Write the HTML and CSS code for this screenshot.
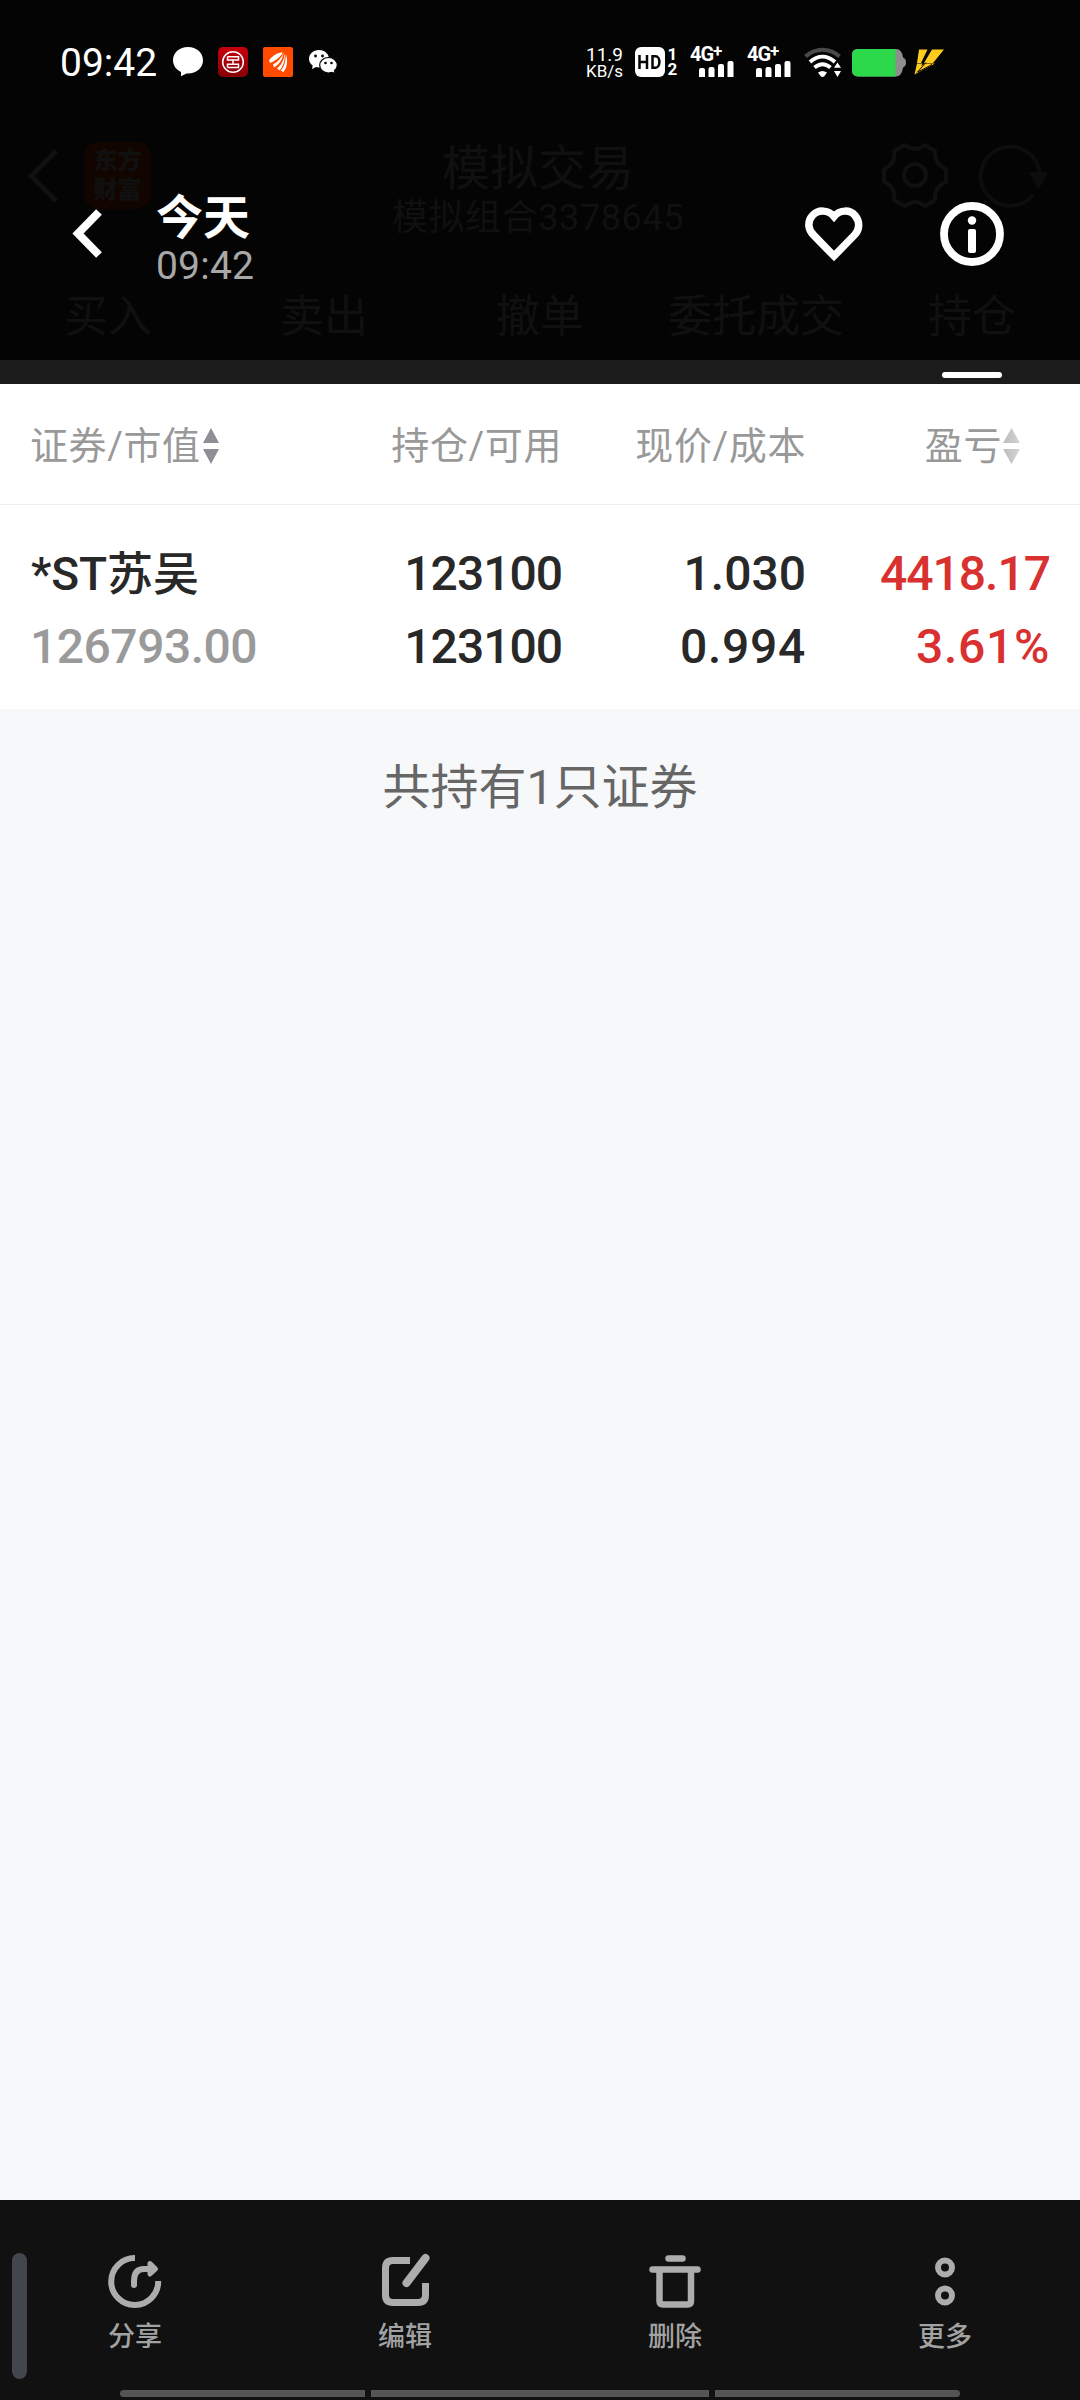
FILE: index.html
```html
<!DOCTYPE html>
<html lang="zh-CN">
<head>
<meta charset="utf-8">
<title>模拟交易</title>
<link rel="stylesheet" href="styles.css">
</head>
<body>
<div class="screen">
  <header class="top">
    <div class="status">
      <span class="clock">09:42</span>
      <div class="status-apps">
        <svg width="30" height="30" viewBox="0 0 30 30"><path d="M15 0C23.500 0 30 5.800 30 13.300S23.500 26.500 15 26.500L13.500 26.400 8 29.200V25C3.500 23 0 18.800 0 13.300 0 5.800 6.500 0 15 0Z" fill="#fff"/></svg>
        <svg width="30" height="30" viewBox="0 0 30 30"><defs><linearGradient id="bank" x1="0" y1="0" x2="0" y2="1"><stop offset="0" stop-color="#c8000c"/><stop offset="1" stop-color="#860006"/></linearGradient></defs><rect width="30" height="30" rx="5" fill="url(#bank)"/><circle cx="15" cy="15" r="10.300" fill="none" stroke="#fff" stroke-width="1.500"/><path d="M9.500 9.800H20.500V13H17.300M12.700 13H9.500V9.800M9.500 20.400H20.500V17.200H17.300M12.700 17.200H9.500V20.400M12 13H18M12 17.200H18M15 13V17.200" fill="none" stroke="#fff" stroke-width="1.500"/></svg>
        <svg width="30" height="30" viewBox="0 0 30 30"><rect width="30" height="30" rx="2" fill="#ff4b00"/><path d="M6 13.500C10 8 15 5.500 20 5.500 17.500 10 13 13.500 7 16ZM20.600 6C19.500 13 16 17.500 11 20.500L10 17.500C15 14.500 18.500 11 20.600 6ZM21.800 6C22.300 14 20 19.500 16.500 23.500L14 21.500C18.500 18 21 13 21.800 6ZM22.800 7C25 13 24.500 20 20.500 25L17.800 23.800C21.500 19 22.800 14 22.800 7Z" fill="#fff"/></svg>
        <svg class="wechat" width="30" height="26" viewBox="0 0 30 26"><path d="M11 1C17 1 21 5 21 10S17 18.500 11 18.500L8 18 4 20 4.700 16.500C2.500 15 1 12.800 1 10 1 5 5 1 11 1Z" fill="#fff"/><circle cx="7.500" cy="7" r="1.400" fill="#050505"/><circle cx="14.500" cy="7" r="1.400" fill="#050505"/><path d="M20.500 8.500C25.500 8.500 29.300 12 29.300 16.200 29.300 18.500 28.200 20.300 26.500 21.500L27.200 24.500 24 23.300 20.500 24C15.500 24 11.700 20.500 11.700 16.200S15.500 8.500 20.500 8.500Z" fill="#fff" stroke="#050505" stroke-width="1.200"/><circle cx="17.500" cy="14" r="1.300" fill="#050505"/><circle cx="23.500" cy="14" r="1.300" fill="#050505"/></svg>
      </div>
      <div class="status-system">
        <div class="speed"><span>11.9</span><span class="unit">KB/s</span></div>
        <div class="hd"><svg width="30" height="30" viewBox="0 0 30 30"><rect width="30" height="30" rx="6" fill="#fff"/><path d="M4.500 8V22M12 8V22M4.500 15H12M17.500 9.300H20.500C25.700 9.300 25.700 20.700 20.500 20.700H17.500Z" fill="none" stroke="#050505" stroke-width="2.500"/></svg><div class="sims"><span>1</span><span>2</span></div></div>
        <div class="cell"><span>4G<sup>+</sup></span><svg width="36" height="16" viewBox="0 0 36 16"><path d="M2 7H4Q6 7 6 9V16H0V9Q0 7 2 7ZM11.500 6H13.500Q15.500 6 15.500 8V16H9.500V8Q9.500 6 11.500 6ZM21 3H23Q25 3 25 5V16H19V5Q19 3 21 3ZM30.500 0H32.500Q34.500 0 34.500 2V16H28.500V2Q28.500 0 30.500 0Z" fill="#fff"/></svg></div>
        <div class="cell"><span>4G<sup>+</sup></span><svg width="36" height="16" viewBox="0 0 36 16"><path d="M2 7H4Q6 7 6 9V16H0V9Q0 7 2 7ZM11.500 6H13.500Q15.500 6 15.500 8V16H9.500V8Q9.500 6 11.500 6ZM21 3H23Q25 3 25 5V16H19V5Q19 3 21 3ZM30.500 0H32.500Q34.500 0 34.500 2V16H28.500V2Q28.500 0 30.500 0Z" fill="#fff"/></svg></div>
        <svg class="wifi" width="38" height="32" viewBox="0 0 38 32"><g fill="none" stroke-width="4"><path d="M1.500 10.500C12 1.500 25 1.500 35.500 10.500" stroke="#4a4a4a"/><path d="M6 16C14 9 23 9 31 16" stroke="#fff"/><path d="M10.500 21.500C16 17 21 17 26.500 21.500" stroke="#fff"/></g><path d="M14 26.500Q18.500 23.500 23 26.500L20.500 30Q18.500 32 16.500 30Z" fill="#fff"/><path d="M33.500 16.500L37 21.800H30ZM33.500 31L30 25H37Z" fill="#fff"/></svg>
        <svg class="battery" width="54" height="28" viewBox="0 0 54 28"><path d="M6 0H44Q50 0 51 8.500Q54 9.500 54 13.500T51 18.500Q50 27.500 44 27.500H6Q0 27 0 21V6Q0 0 6 0Z" fill="#8e8e8e"/><path d="M6 0H43.500V27.500H6Q0 27 0 21V6Q0 0 6 0Z" fill="#2bd94a"/></svg>
        <svg width="30" height="28" viewBox="0 0 30 28"><path d="M5 1.500H13.500L7 15H3ZM18 1.500H30L19 15H10ZM3 15.500H8.500L7 18 11 15.500H21L0.500 26.500Z" fill="#ffcb1c"/><path d="M12 14.500L3 24.500M18 16.500L4 24" stroke="#050505" stroke-width="1"/></svg>
      </div>
    </div>

    <div class="ghost">
      <div class="ghost-bar">
        <div class="ghost-left">
          <svg width="32" height="56" viewBox="0 0 32 56"><path d="M29 3L4 28 29 53" fill="none" stroke="#101010" stroke-width="5"/></svg>
          <div class="logo"><span>东方</span><span>财富</span></div>
        </div>
        <div class="ghost-title">
          <span class="ghost-name">模拟交易</span>
          <span class="ghost-sub">模拟组合3378645</span>
        </div>
        <div class="ghost-right">
          <svg width="68" height="68" viewBox="0 0 68 68" fill="none" stroke="#101010" stroke-width="4"><circle cx="34" cy="34" r="11"/><path d="M24 4Q34 12 44 4L54 10Q53 23 65 28V41Q53 46 54 59L44 65Q34 57 24 65L13 59Q15 46 3 41V28Q15 23 13 10Z" stroke-linejoin="round"/></svg>
          <svg width="72" height="68" viewBox="0 0 72 68"><path d="M56 54A29.500 29.500 0 1 1 62.500 31" fill="none" stroke="#0d0d0d" stroke-width="4"/><path d="M52 31H71L61.500 49Z" fill="#0d0d0d"/></svg>
        </div>
      </div>
      <nav class="ghost-tabs"><span>买入</span><span>卖出</span><span>撤单</span><span>委托成交</span><span>持仓</span></nav>
    </div>

    <div class="toolbar">
      <svg class="back" width="32" height="52" viewBox="0 0 32 52"><path d="M27 4L6 25.500 27 47" fill="none" stroke="#fff" stroke-width="8"/></svg>
      <div class="when"><strong>今天</strong><span>09:42</span></div>
      <svg class="heart" width="60" height="56" viewBox="0 0 60 56"><path d="M30 10.500C24 3.500 14 3.500 8.500 9.500S4 23.500 9.500 29L30 50 50.500 29C56 23.500 56 15.500 51 9.500S36 3.500 30 10.500Z" fill="none" stroke="#fff" stroke-width="7.500" stroke-miterlimit="10"/></svg>
      <svg width="64" height="64" viewBox="0 0 64 64"><circle cx="32" cy="32" r="28" fill="none" stroke="#fff" stroke-width="7.800"/><circle cx="32" cy="18.500" r="4.200" fill="#fff"/><rect x="28" y="27" width="8" height="24" rx="2" fill="#fff"/></svg>
    </div>
  </header>
  <div class="tab-strip"><i class="indicator"></i></div>

  <main class="content">
    <div class="row head">
      <div class="left"><span>证券/市值</span><svg width="16" height="36" viewBox="0 0 16 36"><path d="M8 0L16 15H0ZM8 36L0 21H16Z" fill="#8e8e94"/></svg></div>
      <div>持仓/可用</div>
      <div>现价/成本</div>
      <div class="profit"><span>盈亏</span><svg width="17" height="36" viewBox="0 0 17 36"><defs><linearGradient id="fade"><stop offset="0" stop-color="#bcbcbc"/><stop offset="1" stop-color="#d4d4d6"/></linearGradient></defs><path d="M8.500 0L17 15H0ZM8.500 36L0 21H17Z" fill="url(#fade)"/></svg></div>
    </div>
    <div class="row stock">
      <div class="left"><span class="name">*ST苏吴</span><span class="muted">126793.00</span></div>
      <div class="tight"><span>123100</span><span>123100</span></div>
      <div><span>1.030</span><span class="loose">0.994</span></div>
      <div class="gain"><span class="tight">4418.17</span><span class="loose">3.61%</span></div>
    </div>
    <p class="total">共持有1只证券</p>
  </main>

  <footer class="bottom">
    <nav class="actions">
      <div class="action"><svg width="54" height="58" viewBox="0 0 54 58" fill="none" stroke="#adadad" stroke-width="6"><path d="M27 6A23.500 23.500 0 1 0 50.200 29"/><path d="M26 33V29Q26 17 36 17H42" stroke-linecap="round" stroke-width="6"/><path d="M42 11.500L47.500 17 42 22Z" stroke-linejoin="round" stroke-width="5" fill="#adadad"/></svg><span>分享</span></div>
      <div class="action"><svg width="54" height="58" viewBox="0 0 54 58" fill="none" stroke="#adadad" stroke-width="7"><path d="M32 8.500H15Q7.500 8.500 7.500 16V43Q7.500 50.500 15 50.500H40Q47.500 50.500 47.500 43V31"/><path d="M28.500 31L47.500 6" stroke-width="8" stroke-linecap="round"/></svg><span>编辑</span></div>
      <div class="action"><svg width="54" height="58" viewBox="0 0 54 58" fill="none" stroke="#adadad" stroke-width="6.500"><path d="M20.500 6.500H34.500M4.500 17.500H49.500" stroke-linecap="round"/><path d="M11.500 18V49Q11.500 52.500 15 52.500H39.500Q43 52.500 43 49V18"/></svg><span>删除</span></div>
      <div class="action"><svg width="54" height="58" viewBox="0 0 54 58" fill="none" stroke="#adadad" stroke-width="6"><circle cx="27" cy="15.500" r="7"/><circle cx="27" cy="43.500" r="7"/></svg><span>更多</span></div>
    </nav>
    <div class="gesture"><i></i><i class="middle"></i><i></i></div>
    <i class="edge-handle"></i>
  </footer>
</div>
</body>
</html>
```

FILE: styles.css
```css
* { box-sizing: border-box; }
body { margin: 0; }
svg { display: block; flex: none; }

.screen {
  width: 1080px;
  height: 2400px;
  display: flex;
  flex-direction: column;
  background: #f7f8fa;
  color: #282828;
  font-family: Roboto, "Noto Sans CJK SC", sans-serif;
}

.top {
  position: relative;
  height: 360px;
  background: #040404;
  color: #fff;
}

.status {
  height: 124px;
  padding: 0 136px 0 60px;
  display: flex;
  align-items: center;
}
.clock {
  width: 113px;
  padding-top: 1px;
  font-size: 39px;
  line-height: 40px;
}
.status-apps { display: flex; align-items: center; gap: 15px; }
.status-system { margin-left: auto; display: flex; align-items: center; }
.speed {
  width: 49px;
  display: flex;
  flex-direction: column;
  font-size: 19px;
  line-height: 18px;
}
.speed .unit { font-size: 17px; line-height: 15px; }
.hd { display: flex; gap: 2px; }
.sims {
  width: 11px;
  display: flex;
  flex-direction: column;
  align-items: center;
  font-size: 17px;
  font-weight: 700;
  line-height: 15px;
}
.cell {
  width: 45px;
  height: 32px;
  margin-left: 12px;
  display: flex;
  flex-direction: column;
  font-size: 20px;
  font-weight: 700;
  line-height: 16px;
  letter-spacing: -1px;
}
.cell sup { font-size: 17px; line-height: 0; vertical-align: 4px; }
.cell svg { margin-left: 9px; margin-top: -1px; }
.wifi { margin-left: 12px; }
.battery { margin: 2px 8px 0 10px; }

.ghost { color: #101010; }
.ghost-bar {
  height: 134px;
  padding: 16px 32px 0 26px;
  display: grid;
  grid-template-columns: 1fr 300px 1fr;
}
.ghost-left { display: flex; align-items: flex-start; gap: 25px; padding-top: 2px; }
.ghost-left svg { margin: 6px 0 0 1px; }
.logo {
  width: 67px;
  height: 67px;
  padding-top: 5px;
  border-radius: 14px;
  background: #120500;
  display: flex;
  flex-direction: column;
  align-items: center;
  font-size: 24px;
  font-weight: 900;
  line-height: 29px;
}
.ghost-title { display: flex; flex-direction: column; align-items: center; padding: 2px 0 0 2px; white-space: nowrap; }
.ghost-name { font-size: 48px; line-height: 54px; }
.ghost-sub { font-size: 36px; line-height: 44px; letter-spacing: 0.6px; }
.ghost-right { display: flex; justify-content: flex-end; gap: 28px; padding-top: 1px; margin-right: -1px; }
.ghost-tabs {
  height: 116px;
  display: grid;
  grid-template-columns: repeat(5, 1fr);
  text-align: center;
  font-size: 44px;
  line-height: 119px;
}

.toolbar {
  position: absolute;
  left: 0;
  top: 186px;
  width: 1080px;
  height: 96px;
  padding: 0 76px 0 72px;
  display: flex;
  align-items: center;
}
.when { margin: 0 auto 0 52px; padding-top: 6px; display: flex; flex-direction: column; }
.when strong { font-size: 47px; line-height: 58px; font-weight: 700; }
.when span { font-size: 39px; line-height: 38px; color: #a8a8a8; font-weight: 400; letter-spacing: 0.200px; }
.heart { margin-right: 76px; }

.tab-strip {
  height: 24px;
  padding: 12px 78px 0 0;
  display: flex;
  justify-content: flex-end;
  background: #1c1c1c;
}
.indicator { width: 60px; height: 6px; border-radius: 3px; background: #fff; }

.content { flex: 1; }
.row {
  display: grid;
  grid-template-columns: 300px 232px 244px 244px;
  padding: 0 30px;
  background: #fff;
  text-align: right;
}
.row .left { text-align: left; }
.head {
  height: 121px;
  padding-top: 4px;
  border-bottom: 1px solid #ececec;
  align-items: center;
  font-size: 38px;
  line-height: 56px;
  letter-spacing: 0.600px;
  color: #999;
}
.head .left { display: flex; align-items: center; gap: 2px; }
.profit { display: flex; align-items: center; justify-content: flex-end; gap: 1px; padding-right: 30px; }
.stock {
  height: 204px;
  padding-top: 32px;
  font-size: 48px;
  font-weight: 500;
  line-height: 73px;
}
.stock span { display: block; }
.stock .name { height: 73px; padding: 1px 0 0 1px; font-size: 46px; letter-spacing: -0.100px; }
.stock .tight { letter-spacing: -1px; }
.stock .loose { letter-spacing: 0.700px; }
.stock .muted { color: #9a9a9a; letter-spacing: -0.500px; }
.stock .gain { color: #d93030; }
.total {
  margin: 0;
  padding-top: 44px;
  text-align: center;
  font-size: 48px;
  line-height: 70px;
  color: #666;
}

.bottom {
  position: relative;
  height: 200px;
  background: #111;
  color: #a2a2a2;
}
.actions {
  height: 190px;
  padding-top: 52px;
  display: grid;
  grid-template-columns: repeat(4, 1fr);
}
.action {
  display: flex;
  flex-direction: column;
  align-items: center;
  font-size: 27px;
  font-weight: 500;
  line-height: 40px;
}
.action span { margin-top: 7px; }
.gesture { display: flex; gap: 6px; padding: 0 120px; }
.gesture i { flex: 245; height: 7px; background: #555; }
.gesture .middle { flex: 338; }
.gesture i:first-child { border-radius: 4px 0 0 4px; }
.gesture i:last-child { border-radius: 0 4px 4px 0; }
.edge-handle {
  position: absolute;
  left: 12px;
  top: 53px;
  width: 15px;
  height: 126px;
  border-radius: 8px;
  background: #44464e;
}
```
